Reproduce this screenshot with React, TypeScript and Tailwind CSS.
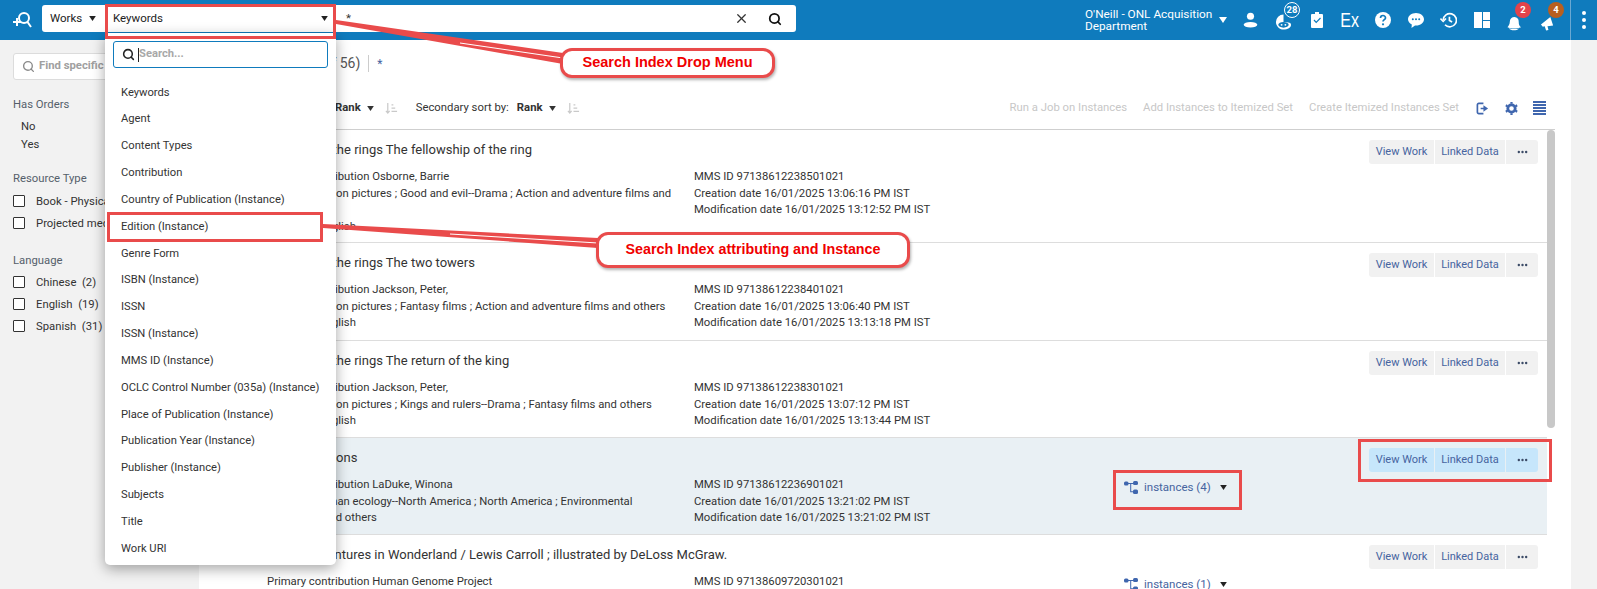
import { Search, X } from 'lucide-react';

const FONT = 'font-[Roboto,sans-serif]';

const menuItems = [
  'Keywords', 'Agent', 'Content Types', 'Contribution', 'Country of Publication (Instance)',
  'Edition (Instance)', 'Genre Form', 'ISBN (Instance)', 'ISSN', 'ISSN (Instance)', 'MMS ID (Instance)',
  'OCLC Control Number (035a) (Instance)', 'Place of Publication (Instance)', 'Publication Year (Instance)',
  'Publisher (Instance)', 'Subjects', 'Title', 'Work URI',
];

const rows = [
  {
    title: 'The lord of the rings The fellowship of the ring',
    h: 'h-[113px]',
    left: ['Primary contribution Osborne, Barrie', 'Subjects Motion pictures ; Good and evil--Drama ; Action and adventure films and', 'others', 'Language English'],
    mms: '97138612238501021', created: '16/01/2025 13:06:16 PM IST', modified: '16/01/2025 13:12:52 PM IST',
  },
  {
    title: 'The lord of the rings The two towers',
    h: 'h-[98px]',
    left: ['Primary contribution Jackson, Peter,', 'Subjects Motion pictures ; Fantasy films ; Action and adventure films and others', 'Language English'],
    mms: '97138612238401021', created: '16/01/2025 13:06:40 PM IST', modified: '16/01/2025 13:13:18 PM IST',
  },
  {
    title: 'The lord of the rings The return of the king',
    h: 'h-[97px]',
    left: ['Primary contribution Jackson, Peter,', 'Subjects Motion pictures ; Kings and rulers--Drama ; Fantasy films and others', 'Language English'],
    mms: '97138612238301021', created: '16/01/2025 13:07:12 PM IST', modified: '16/01/2025 13:13:44 PM IST',
  },
  {
    title: 'All our relations',
    h: 'h-[97px]',
    active: true,
    instances: 4,
    left: ['Primary contribution LaDuke, Winona', 'Subjects Human ecology--North America ; North America ; Environmental', 'movement and others'],
    mms: '97138612236901021', created: '16/01/2025 13:21:02 PM IST', modified: '16/01/2025 13:21:02 PM IST',
  },
  {
    title: "Alice's adventures in Wonderland / Lewis Carroll ; illustrated by DeLoss McGraw.",
    h: 'h-[97px]',
    instances: 1,
    left: ['Primary contribution Human Genome Project'],
    mms: '97138609720301021', created: '', modified: '',
  },
];

function Caret({ className = 'text-[#222]' }: { className?: string }) {
  return (
    <svg viewBox="0 0 8 6" className={`w-[7px] h-[5px] shrink-0 ${className}`}>
      <path d="M0 0h8L4 6z" fill="currentColor" />
    </svg>
  );
}

function SortIcon() {
  return (
    <svg viewBox="0 0 14 14" className="w-[13px] h-[13px] text-[#c9c9c9]" fill="none" stroke="currentColor" strokeWidth="1.3">
      <path d="M3 1v11M1 9.5l2 2.5 2-2.5M7 3h2M7 6.5h4M7 10h6" />
    </svg>
  );
}

function TreeIcon() {
  return (
    <svg viewBox="0 0 14 13" className="w-[14px] h-[13px] text-[#3f66ae]" fill="currentColor">
      <rect x="0" y="0.5" width="4.5" height="4" rx="1.5" />
      <rect x="9" y="0" width="5" height="4" rx="1.5" />
      <rect x="9" y="8.5" width="5" height="4.5" rx="1.5" />
      <path d="M4 2h5v1H7.2v7.2H9v1H6.2V3H4z" />
    </svg>
  );
}

function Actions({ active }: { active?: boolean }) {
  const bg = active ? 'bg-[#c6e6fb]' : 'bg-[#f1f1f1]';
  const cell = `h-[24px] flex items-center justify-center text-[11px] text-[#46649f] ${bg}`;
  return (
    <div className="flex gap-px">
      <div className={`${cell} w-[65px] rounded-l-[3px]`}>View Work</div>
      <div className={`${cell} w-[70px]`}>Linked Data</div>
      <div className={`${cell} w-[32px] rounded-r-[3px]`}>
        <svg viewBox="0 0 12 4" className="w-[11px] h-[4px] text-[#3b4a66]" fill="currentColor">
          <circle cx="2" cy="2" r="1.3" /><circle cx="6" cy="2" r="1.3" /><circle cx="10" cy="2" r="1.3" />
        </svg>
      </div>
    </div>
  );
}

function Row({ row }: { row: (typeof rows)[number] }) {
  return (
    <div className={`${row.h} shrink-0 border-b border-[#dddddd] pl-[68px] pr-[9px] pt-[10px] ${row.active ? 'bg-[#e9f0f4]' : 'bg-white'}`}>
      <div className="flex justify-between h-[24px]">
        <div className="text-[13px] text-[#333] leading-[20px]">{row.title}</div>
        <Actions active={row.active} />
      </div>
      <div className="flex mt-[5px] text-[11.3px] leading-[16.7px] text-[#333]">
        <div className="w-[427px] pr-[12px]">
          {row.left.map((l) => (<div key={l}>{l}</div>))}
        </div>
        <div className="w-[430px]">
          <div>MMS ID {row.mms}</div>
          {row.created && <div>Creation date {row.created}</div>}
          {row.modified && <div>Modification date {row.modified}</div>}
        </div>
        {row.instances && (
          <div className="flex items-center h-[24px] mt-[-2px]">
            <TreeIcon />
            <span className="ml-[6px] text-[#46649f] text-[11.5px]">instances ({row.instances})</span>
            <Caret className="ml-[9px] text-[#222]" />
          </div>
        )}
      </div>
    </div>
  );
}

function Check({ label }: { label: string }) {
  return (
    <div className="flex items-center h-[22px]">
      <span className="w-[12px] h-[12px] mt-[-4px] border border-[#333] rounded-[1px] bg-white shrink-0" />
      <span className="ml-[11px] whitespace-pre">{label}</span>
    </div>
  );
}

function TopIcon({ children, badge, badgeClass }: { children: React.ReactNode; badge?: string; badgeClass?: string }) {
  return (
    <div className="relative w-[33px] h-[40px] flex items-center justify-center text-white">
      {children}
      {badge && (
        <span className={`absolute top-[2px] left-[17px] w-[16px] h-[16px] rounded-full flex items-center justify-center text-[9.5px] font-bold text-white ${badgeClass}`}>
          {badge}
        </span>
      )}
    </div>
  );
}

function TopBar() {
  return (
    <div className="h-[40px] bg-[#0f7bbd] flex items-center shrink-0">
      <div className="w-[42px] flex justify-center">
        <svg viewBox="0 0 20 18" className="w-[20px] h-[18px] ml-[1px] text-white" fill="none" stroke="currentColor" strokeWidth="2">
          <circle cx="12" cy="7" r="5" />
          <path d="M15.5 11l3.5 5M1 11h8M5 7v8" />
        </svg>
      </div>
      <div className="w-[754px] h-[27px] mt-[-3px] bg-white rounded-[3px] flex items-center text-[11.5px] text-[#222]">
        <div className="w-[63px] flex items-center pl-[8px]">
          <span>Works</span>
          <Caret className="ml-[7px]" />
        </div>
        <div className="w-[231px] flex items-center justify-between pl-[8px] pr-[8px]">
          <span>Keywords</span>
          <Caret />
        </div>
        <div className="flex-1 pl-[10px] text-[#333]">*</div>
        <X className="w-[15px] h-[15px] text-[#333] mr-[19px]" strokeWidth={2} />
        <Search className="w-[14px] h-[14px] text-[#111] mr-[14px]" strokeWidth={3} />
      </div>
      <div className="ml-[289px] w-[122px] whitespace-nowrap text-[11.8px] leading-[12px] text-white">
        O'Neill - ONL Acquisition<br />Department
      </div>
      <Caret className="ml-[12px] !w-[8px] !h-[6px] text-white" />
      <div className="ml-[7px] flex">
        <TopIcon>
          <svg viewBox="0 0 16 16" className="w-[15px] h-[16px]" fill="currentColor">
            <circle cx="8" cy="4" r="3.8" /><ellipse cx="8" cy="13" rx="7.3" ry="3" />
          </svg>
        </TopIcon>
        <TopIcon badge="28" badgeClass="border border-white bg-[#0f7bbd]">
          <svg viewBox="0 0 18 16" className="w-[17px] h-[16px] mt-[4px]" fill="currentColor">
            <path d="M9 0a8 8 0 00-8 8c0 4 3.5 8 8 8s8-2 8-5c0-2-2-3-8-3V0z" />
            <ellipse cx="9" cy="11" rx="5.5" ry="3" fill="#0f7bbd" />
            <circle cx="7" cy="11" r="1" /><circle cx="11" cy="11" r="1" />
          </svg>
        </TopIcon>
        <TopIcon>
          <svg viewBox="0 0 12 16" className="w-[12px] h-[16px]" fill="currentColor">
            <path d="M4 0h4v2h3a1 1 0 011 1v12a1 1 0 01-1 1H1a1 1 0 01-1-1V3a1 1 0 011-1h3z" />
            <path d="M3 8l2.2 2.4L9.5 6" fill="none" stroke="#0f7bbd" strokeWidth="1.2" />
          </svg>
        </TopIcon>
        <TopIcon>
          <span className="font-['Liberation_Sans',sans-serif] text-[20px] leading-none scale-x-[0.8]">Ex</span>
        </TopIcon>
        <TopIcon>
          <svg viewBox="0 0 16 16" className="w-[16px] h-[16px]">
            <circle cx="8" cy="8" r="8" fill="currentColor" />
            <path d="M5.5 6a2.5 2.5 0 115 0c0 1.6-2.5 1.8-2.5 3.5" fill="none" stroke="#0f7bbd" strokeWidth="1.7" />
            <circle cx="8" cy="12.3" r="1.1" fill="#0f7bbd" />
          </svg>
        </TopIcon>
        <TopIcon>
          <svg viewBox="0 0 16 15" className="w-[16px] h-[15px]">
            <path d="M8 0c4.4 0 8 2.8 8 6.3s-3.6 6.3-8 6.3l-1-.1L3.5 15l.3-3.5C1.5 10.4 0 8.5 0 6.3 0 2.8 3.6 0 8 0z" fill="currentColor" />
            <circle cx="4.8" cy="6.3" r="1" fill="#0f7bbd" /><circle cx="8" cy="6.3" r="1" fill="#0f7bbd" /><circle cx="11.2" cy="6.3" r="1" fill="#0f7bbd" />
          </svg>
        </TopIcon>
        <TopIcon>
          <svg viewBox="0 0 18 16" className="w-[17px] h-[16px]" fill="none" stroke="currentColor" strokeWidth="1.8">
            <path d="M3.4 8a7 7 0 111.9 5" /><path d="M0.5 6.5l2.900 3 3-3" strokeWidth="1.6" /><path d="M10 4.5V8.500l2.800 1.600" />
          </svg>
        </TopIcon>
        <TopIcon>
          <div className="grid grid-cols-[8px_7px] grid-rows-[8px_7px] gap-px">
            <div className="bg-white row-span-2" /><div className="bg-white" /><div className="bg-white" />
          </div>
        </TopIcon>
        <TopIcon badge="2" badgeClass="bg-[#e2434b] left-[16px]">
          <svg viewBox="0 0 16 16" className="w-[15px] h-[15px] mt-[6px]" fill="currentColor">
            <path d="M8 1a5 5 0 00-5 5c0 3-1.5 4.5-2.5 6C4 13.5 10 14 15 12c-2-1.500-2.500-3-2.500-6A5 5 0 008 1z" />
            <path d="M2 13c2.5 1 8 1.500 11 .2-3 2.800-9 2.800-11-.2z" />
          </svg>
        </TopIcon>
        <TopIcon badge="4" badgeClass="bg-[#b95f1f]">
          <svg viewBox="0 0 16 16" className="w-[15px] h-[15px] mt-[6px]" fill="currentColor">
            <path d="M1 9L11 1l3 9-6 1 1 4-2.5.5L5 11l-2 .5z" />
          </svg>
        </TopIcon>
      </div>
      <div className="ml-auto h-[40px] w-[27px] border-l border-[#6aa8d2] flex flex-col items-center justify-center gap-[3px]">
        <span className="w-[4px] h-[4px] rounded-full bg-white" />
        <span className="w-[4px] h-[4px] rounded-full bg-white" />
        <span className="w-[4px] h-[4px] rounded-full bg-white" />
      </div>
    </div>
  );
}

function Sidebar() {
  return (
    <aside className="w-[199px] shrink-0 pl-[13px] text-[11.3px] text-[#333]">
      <div className="mt-[13px] w-[150px] h-[27px] bg-white border border-[#dcdcdc] rounded-[3px] flex items-center pl-[8px]">
        <Search className="w-[13px] h-[13px] text-[#8a8a8a]" strokeWidth={2.5} />
        <span className="ml-[4px] font-bold text-[#a0a0a0]">Find specific</span>
      </div>
      <div className="mt-[17px] text-[#555f6b]">Has Orders</div>
      <div className="mt-[4px] pl-[8px] leading-[18px]">
        <div>No</div>
        <div>Yes</div>
      </div>
      <div className="mt-[17px] text-[#555f6b]">Resource Type</div>
      <div className="mt-[4px]">
        <Check label="Book - Physical" />
        <Check label="Projected media" />
      </div>
      <div className="mt-[17px] text-[#555f6b]">Language</div>
      <div className="mt-[3px]">
        <Check label="Chinese  (2)" />
        <Check label="English  (19)" />
        <Check label="Spanish  (31)" />
      </div>
    </aside>
  );
}

function Main() {
  return (
    <main className="flex-1 mr-[26px] bg-white flex flex-col min-w-0 pr-[16px] overflow-hidden">
      <div className="h-[90px] shrink-0 border-b border-[#cfcfcf] relative">
        <div className="h-[46px] flex items-center pl-[39px] pt-[1px]">
          <span className="text-[14px] text-[#555]">Works (1 - 50 of 56)</span>
          <span className="mx-[8px] w-px h-[17px] bg-[#ccc]" />
          <span className="text-[12px] text-[#46649f]">*</span>
        </div>
        <div className="flex items-center h-[24px] mt-[10px] text-[11.3px] text-[#333] pr-[9px]">
          <span className="ml-[50px]">Primary sort by:</span>
          <span className="ml-[7px] font-bold">Rank</span>
          <Caret className="ml-[6px]" />
          <span className="ml-[11px]"><SortIcon /></span>
          <span className="ml-[18px]">Secondary sort by:</span>
          <span className="ml-[8px] font-bold">Rank</span>
          <Caret className="ml-[6px]" />
          <span className="ml-[11px]"><SortIcon /></span>
          <div className="ml-auto flex items-center text-[#c7c7c7]">
            <span>Run a Job on Instances</span>
            <span className="ml-[16px]">Add Instances to Itemized Set</span>
            <span className="ml-[16px]">Create Itemized Instances Set</span>
            <svg viewBox="0 0 14 14" className="ml-[17px] w-[13px] h-[13px] text-[#3f66ae]" fill="none" stroke="currentColor" strokeWidth="1.8">
              <path d="M8 1.5H3A1.5 1.5 0 001.5 3v8A1.5 1.5 0 003 12.500h5M5 7h4" />
              <path d="M8 3.5L13 7l-5 3.5z" fill="currentColor" stroke="none" />
            </svg>
            <svg viewBox="0 0 14 14" className="ml-[16px] w-[13px] h-[13px] text-[#3f66ae]" fill="none" stroke="currentColor">
              <circle cx="7" cy="7" r="4" strokeWidth="3" />
              <path d="M7 0v2M7 12v2M0.9 3.5l1.7 1M11.4 9.5l1.7 1M0.9 10.5l1.7-1M11.4 4.5l1.7-1" strokeWidth="2.4" />
            </svg>
            <div className="ml-[15px] w-[13px] flex flex-col gap-[1px]">
              {[0, 1, 2, 3, 4].map((i) => (<span key={i} className="h-[2px] bg-[#3f66ae]" />))}
            </div>
          </div>
        </div>
      </div>
      <div className="flex flex-1 min-h-0">
        <div className="flex-1 flex flex-col min-w-0">
          {rows.map((r) => (<Row key={r.title} row={r} />))}
        </div>
        <div className="w-[8px] shrink-0 bg-white">
          <div className="h-[298px] bg-[#c8c8c8] rounded-[4px]" />
        </div>
      </div>
    </main>
  );
}

function SearchIndexMenu() {
  return (
    <div className="absolute left-[105px] top-[33px] w-[231px] h-[532px] bg-white rounded-b-[5px] shadow-[0_4px_14px_rgba(0,0,0,0.35)] text-[11.2px] text-[#333]">
      <div className="mx-[8px] mt-[8px] h-[27px] border border-[#0f7bbd] rounded-[3px] flex items-center pl-[8px]">
        <Search className="w-[13px] h-[13px] text-[#222]" strokeWidth={2.8} />
        <span className="ml-[3px] w-px h-[14px] bg-[#222]" />
        <span className="font-bold text-[#a8a8a8]">Search...</span>
      </div>
      <div className="mt-[11px] pt-[0.5px]">
        {menuItems.map((m) => (
          <div key={m} className="h-[26.85px] pl-[16px] flex items-center whitespace-nowrap">{m}</div>
        ))}
      </div>
    </div>
  );
}

function Callout({ className, children }: { className: string; children: React.ReactNode }) {
  return (
    <div className={`absolute bg-white border-[3px] border-[#e94b4b] rounded-[12px] shadow-[1px_2px_3px_rgba(0,0,0,0.3)] flex items-center justify-center font-['Liberation_Sans',sans-serif] font-bold text-[#f00000] ${className}`}>
      {children}
    </div>
  );
}

export default function App() {
  return (
    <div className={`relative w-[1597px] h-[589px] overflow-hidden bg-[#f2f2f2] flex flex-col ${FONT}`}>
      <TopBar />
      <div className="flex flex-1 min-h-0">
        <Sidebar />
        <Main />
      </div>

      <SearchIndexMenu />

      <div className="absolute left-[105px] top-[4px] w-[231px] h-[35px] border-[3px] border-[#e94b4b]" />
      <div className="absolute left-[107px] top-[212px] w-[216px] h-[30px] border-[3px] border-[#e94b4b]" />
      <div className="absolute left-[1113px] top-[470px] w-[129px] h-[40px] border-[3px] border-[#e94b4b]" />
      <div className="absolute left-[1358px] top-[439px] w-[194px] h-[43px] border-[3px] border-[#e94b4b]" />

      <svg className="absolute inset-0 w-[1597px] h-[589px] pointer-events-none" viewBox="0 0 1597 589">
        <path d="M336 20L336 24L563 64V53z" fill="#e94b4b" />
        <path d="M460 43L563 58" stroke="#fff" strokeWidth="1" />
        <path d="M323 224L323 228L598 248V238z" fill="#e94b4b" />
        <path d="M450 234L598 243" stroke="#fff" strokeWidth="1" />
      </svg>

      <div className="text-[14.5px]">
        <Callout className="left-[560px] top-[48px] w-[215px] h-[30px]">Search Index Drop Menu</Callout>
      </div>
      <div className="text-[14.3px]">
        <Callout className="left-[596px] top-[232px] w-[314px] h-[36px]">Search Index attributing and Instance</Callout>
      </div>
    </div>
  );
}
